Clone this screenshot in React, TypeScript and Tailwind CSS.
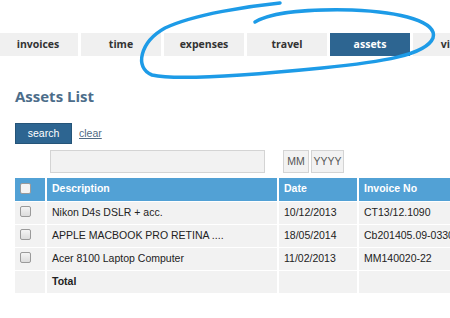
import * as React from "react";

const TABS = ["invoices", "time", "expenses", "travel", "assets", "view"];

const ROWS = [
    { desc: "Nikon D4s DSLR + acc.", date: "10/12/2013", inv: "CT13/12.1090" },
    { desc: "APPLE MACBOOK PRO RETINA ....", date: "18/05/2014", inv: "Cb201405.09-0330" },
    { desc: "Acer 8100 Laptop Computer", date: "11/02/2013", inv: "MM140020-22" },
];

const Check = ({ light }: { light?: boolean }) => (
    <span
        className={`inline-block h-[11px] w-[11px] rounded-[2px] border border-[#9a9a9a] ${
            light ? "bg-[#f4f4f4]" : "bg-gradient-to-b from-[#f4f4f4] to-[#dcdcdc]"
        }`}
    />
);

export default function App() {
    return (
        <div className="relative h-[318px] w-[450px] overflow-hidden bg-white font-['Liberation_Sans',Arial,sans-serif]">
            {/* tabs */}
            <nav className="ml-[-2px] mt-[33px] flex gap-[3px] font-['Open_Sans',sans-serif] text-[10.5px] font-bold">
                {TABS.map((t) => (
                    <div
                        key={t}
                        className={`flex h-[23px] w-[80px] shrink-0 items-center justify-center ${
                            t === "assets" ? "bg-[#2d6591] text-white" : "bg-[#f0f0f0] text-[#333]"
                        }`}
                    >
                        {t}
                    </div>
                ))}
            </nav>

            <div className="pl-[15px]">
                <h1 className="mt-[29px] font-['Open_Sans',sans-serif] text-[15px] font-bold leading-[22px] text-[#4c6d8a]">
                    Assets List
                </h1>

                <div className="mt-[16px] flex items-center gap-[7px] text-[10.5px]">
                    <button className="h-[21px] w-[57px] border border-[#255478] bg-[#2d6591] text-white">search</button>
                    <a className="text-[#4f6983] underline">clear</a>
                </div>

                <div className="mt-[6px] flex items-center text-[10.5px] text-[#555]">
                    <div className="ml-[35px] h-[23px] w-[215px] border border-[#d4d4d4] bg-[#f2f2f2]" />
                    <div className="ml-[18px] flex h-[23px] w-[26px] items-center justify-center border border-[#d4d4d4] bg-[#f2f2f2]">
                        MM
                    </div>
                    <div className="ml-[2px] flex h-[23px] w-[33px] items-center justify-center border border-[#d4d4d4] bg-[#f2f2f2]">
                        YYYY
                    </div>
                </div>

                <table className="mt-[5px] w-[480px] table-fixed border-collapse text-[10.5px] text-[#222]">
                    <colgroup>
                        <col className="w-[31px]" />
                        <col className="w-[232px]" />
                        <col className="w-[80px]" />
                        <col />
                    </colgroup>
                    <thead>
                        <tr className="h-[23px] bg-[#52a1d5] text-left font-bold text-white">
                            <th className="border-r-2 border-b border-white pl-[5px] pt-[3px]">
                                <Check light />
                            </th>
                            <th className="border-r-2 border-b border-white pl-[5px]">Description</th>
                            <th className="border-r-2 border-b border-white pl-[5px]">Date</th>
                            <th className="border-b border-white pl-[5px]">Invoice No</th>
                        </tr>
                    </thead>
                    <tbody>
                        {ROWS.map((r) => (
                            <tr key={r.inv} className="h-[23px] bg-[#f2f2f2]">
                                <td className="border-r-2 border-b border-white pl-[5px] pt-[3px]">
                                    <Check />
                                </td>
                                <td className="truncate border-r-2 border-b border-white pl-[5px]">{r.desc}</td>
                                <td className="border-r-2 border-b border-white pl-[5px]">{r.date}</td>
                                <td className="whitespace-nowrap border-b border-white pl-[5px]">{r.inv}</td>
                            </tr>
                        ))}
                        <tr className="h-[23px] bg-[#f2f2f2] font-bold">
                            <td className="border-r-2 border-white" />
                            <td className="border-r-2 border-white pl-[5px]">Total</td>
                            <td className="border-r-2 border-white" />
                            <td />
                        </tr>
                    </tbody>
                </table>
            </div>

            {/* hand-drawn highlight */}
            <svg className="pointer-events-none absolute left-0 top-0" width="450" height="90" viewBox="0 0 450 90">
                <path
                    d="M280 3 C250 6 195 14 165 28 C140 42 134 68 152 75 C178 81 262 74 322 68 C382 62 426 55 433 38 C438 22 402 12 352 10 C312 9 272 12 255 22"
                    fill="none"
                    stroke="#1d9be7"
                    strokeWidth="3.5"
                    strokeLinecap="round"
                />
            </svg>
        </div>
    );
}
